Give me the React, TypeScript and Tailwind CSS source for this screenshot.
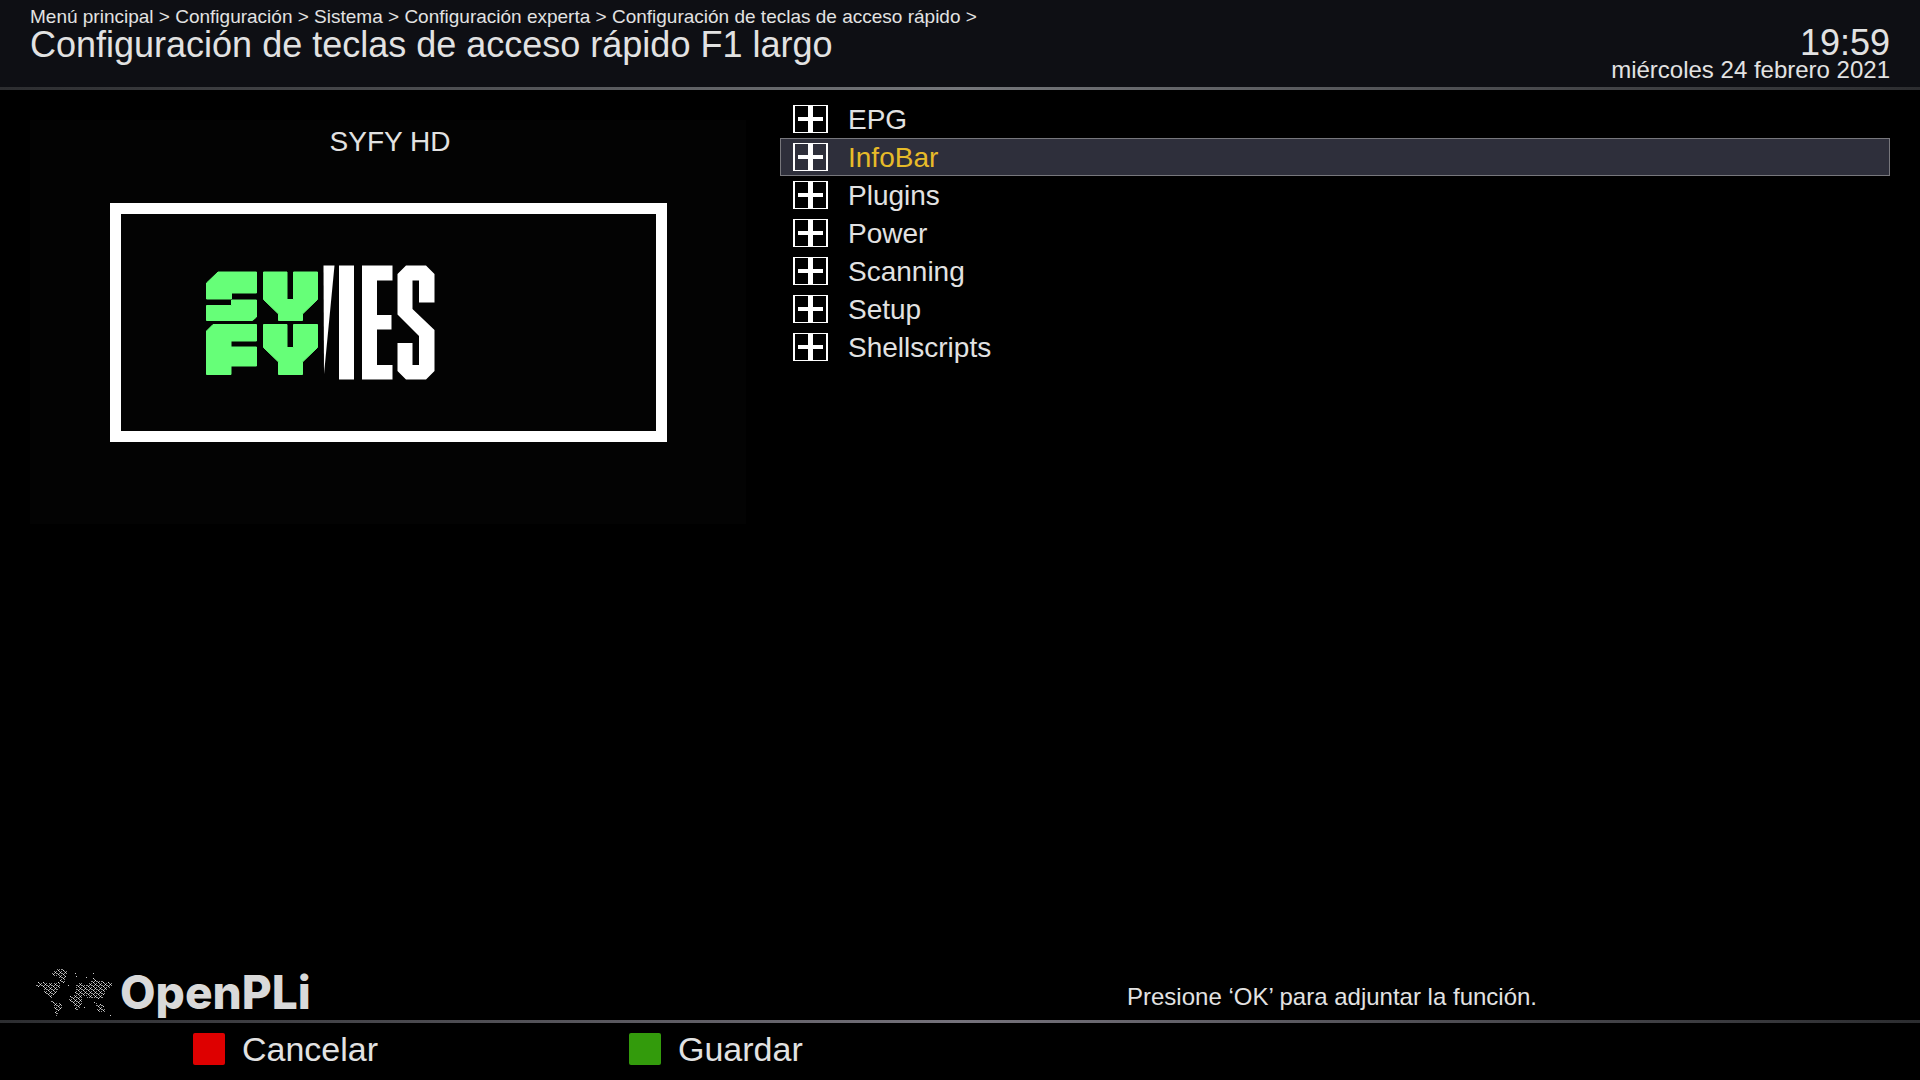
import { useState } from "react";

const trail = [
  "Menú principal",
  "Configuración",
  "Sistema",
  "Configuración experta",
  "Configuración de teclas de acceso rápido",
];

const entries = ["EPG", "InfoBar", "Plugins", "Power", "Scanning", "Setup", "Shellscripts"];

function ExpandIcon() {
  return (
    <svg className="h-7 w-[35px] shrink-0" viewBox="0 0 35 28" shapeRendering="crispEdges" aria-hidden="true">
      <path fill="#fff" fillRule="evenodd" d="M0 0H35V28H0ZM2 1V27H33V1Z" />
      <path fill="#fff" d="M15 0H20V28H15ZM5 12H30V16H5Z" />
    </svg>
  );
}

function ChannelLogo() {
  return (
    <svg className="h-full w-full" viewBox="121 214 535 217" role="img" aria-label="SYFY">
      <g fill="#66ff78" stroke="#66ff78" strokeWidth="1" strokeLinejoin="round">
        <path d="M218 272H256.500V293H231.500V299H206.500V283Z" />
        <path d="M231.500 300H256.500V317L252.500 320.500H206.500V305.500H231.500Z" />
        <path d="M263.500 272H287V299.500H293.500V272H317.500V299.500L302.500 314V320.500H278.500V314L263.500 299.500Z" />
        <path d="M213 324.500H256.500V341H231V347H256.500V366H231V374.500H206.500V331Z" />
        <path d="M263.500 324.500H287V347.500H293.500V324.500H317.500V347.500L302.500 362V374.500H278.500V362L263.500 347.500Z" />
      </g>
      <g fill="#fff">
        <path d="M323.500 265.500H334.500L324 374Z" />
        <path d="M339 265.500H354V379.500H339Z" />
        <path d="M362 265.500H392.500V280.500H377V315H391.500V329.500H377V365H392.500V379.500H362Z" />
        <path d="M406 265.500H426L434.500 274V302.500H419V280.500H412.500V309L434.500 330V371L426 379.500H406L397.500 371V343H412.500V365H419V336L397.500 314.500V274Z" />
      </g>
    </svg>
  );
}

function WorldMap() {
  return (
    <svg className="h-[52px] w-[82px] shrink-0" viewBox="10 8 82 52" shapeRendering="crispEdges" aria-hidden="true">
      <defs>
        <pattern id="dots" width="5" height="4" patternUnits="userSpaceOnUse">
          <path fill="#dedede" d="M0 0h1v1h-1zM3 2h1v1h-1z" />
          <path fill="#959595" d="M1 1h1v1h-1zM4 3h1v1h-1zM2 1h1v1h-1zM4 1h1v1h-1zM1 3h1v1h-1z" />
        </pattern>
      </defs>
      <g fill="url(#dots)">
        <path d="M27 11L33 9L42 10L41 18L38 26L36 22L34 17L27 16Z" />
        <path d="M11 24L14 22L28 23L34 22L36 27L33 31L29 34L27 38L23 37L19 31L18 27L11 27Z" />
        <path d="M25 39L30 42L37 44L38 47L34 52L32 57L30 55L31 50L28 45Z" />
        <path d="M51 24L55 22L61 25L68 18L75 21L88 23L86 27L81 30L79 37L73 40L69 38L65 39L60 36L50 35Z" />
        <path d="M45 36L53 34L58 39L56 46L52 52L50 50L49 43L44 40Z" />
        <path d="M71 43L74 45L78 43L81 52L77 53L72 51Z" />
      </g>
      <path
        fill="#ccc"
        d="M50 13h1v1h-1zM51 16h1v1h-1zM68 13h1v1h-1zM43 25h1v1h-1zM85 55h1v1h-1zM69 42h1v1h-1zM59 47h1v1h-1zM61 17h1v1h-1z"
      />
    </svg>
  );
}

function ActionButton({ label, tone }: { label: string; tone: string }) {
  return (
    <button type="button" className="flex w-[436px] items-center gap-[17px] text-left">
      <span className={`size-8 rounded-xs ${tone}`} />
      <span className="text-[34px] leading-[44px]">{label}</span>
    </button>
  );
}

export default function App() {
  const [selected, setSelected] = useState("InfoBar");

  return (
    <div className="flex min-h-screen flex-col bg-black font-['Liberation_Sans',Arial,sans-serif] text-[#e2e2e2]">
      <header className="flex h-[87px] justify-between bg-[#0e0f14] px-[30px]">
        <div className="pt-1.5">
          <nav className="text-[19px] leading-[22px]" aria-label="Ruta">
            {trail.join(" > ")} &gt;
          </nav>
          <h1 className="text-[36px] leading-[34px]">Configuración de teclas de acceso rápido F1 largo</h1>
        </div>
        <div className="pt-[26px] text-right">
          <div className="text-[36px] leading-[34px]">19:59</div>
          <div className="text-[24px] leading-5">miércoles 24 febrero 2021</div>
        </div>
      </header>
      <div className="h-[3px] bg-linear-to-r from-[#2c2d30] via-[#75777b] to-[#2c2d30]" />

      <main className="flex flex-1 gap-[34px] px-[30px]">
        <section className="mt-[30px] flex h-[404px] w-[716px] shrink-0 flex-col items-center bg-[#030303]">
          <h2 className="pt-1.5 pl-1 text-[28px] leading-8">SYFY HD</h2>
          <div className="mt-[45px] h-[239px] w-[557px] border-[11px] border-white">
            <ChannelLogo />
          </div>
        </section>

        <ul className="min-w-0 flex-1 pt-2.5">
          {entries.map((entry) => (
            <li key={entry}>
              <button
                type="button"
                onClick={() => setSelected(entry)}
                className={`flex h-[38px] w-full items-center gap-5 border px-3 text-left text-[28px] ${
                  entry === selected
                    ? "border-[#77777c] bg-[#2e2f3b] text-[#e7bb29]"
                    : "border-transparent"
                }`}
              >
                <ExpandIcon />
                <span className="pt-0.5 leading-8">{entry}</span>
              </button>
            </li>
          ))}
        </ul>
      </main>

      <div className="flex items-end px-[35px]">
        <div className="flex flex-1 items-end gap-[3px] text-[#d9d9d9]">
          <WorldMap />
          <span className="font-[Inter,sans-serif] text-[46px] leading-[56px] font-extrabold">OpenPLi</span>
        </div>
        <p className="w-[758px] pb-[7px] text-[24px] leading-8">Presione ‘OK’ para adjuntar la función.</p>
      </div>
      <div className="h-[3px] bg-linear-to-r from-[#2c2d30] via-[#75727b] to-[#2c2d30]" />
      <footer className="flex h-[57px] items-start pt-1 pl-[193px]">
        <ActionButton label="Cancelar" tone="bg-[#de0000]" />
        <ActionButton label="Guardar" tone="bg-[#339b0c]" />
      </footer>
    </div>
  );
}
